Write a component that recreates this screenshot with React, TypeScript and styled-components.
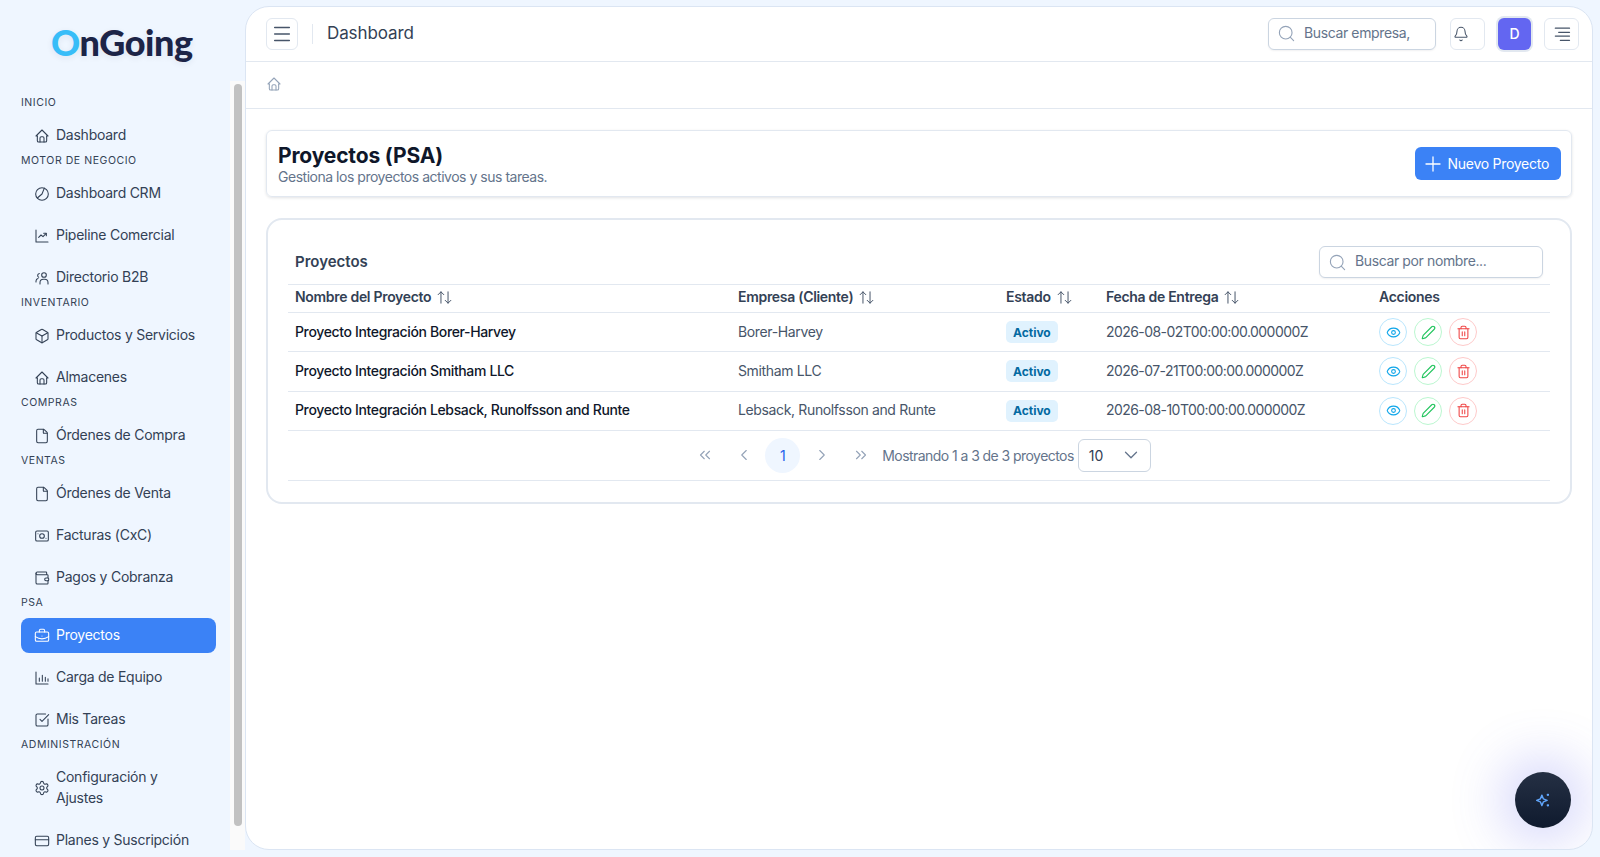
import React from 'react'
import styled, { createGlobalStyle } from 'styled-components'
import {
  Bell, Box, BriefcaseBusiness, ChevronDown, ChevronLeft, ChevronRight, ChevronsLeft, ChevronsRight,
  CreditCard, Eye, File, Menu, Pen, Plus, Search, Settings, SquareCheckBig, Trash2, Wallet,
  ArrowUpDown,
} from 'lucide-react'

const GlobalStyle = createGlobalStyle`
  html, body { margin: 0; height: 100%; }
  body {
    background: #eff6ff;
    font-family: Inter, "Liberation Sans", sans-serif;
    color: #334155;
    overflow: hidden;
  }
  #root { height: 100%; }
  * { box-sizing: border-box; }
`

const Shell = styled.div`
  display: flex;
  height: 857px;
  padding: 6px 7px 7px 6px;
`

const Sidebar = styled.aside`
  position: relative;
  width: 239px;
  flex: none;
  display: flex;
  flex-direction: column;
`

const LogoBox = styled.div`
  height: 75px;
  flex: none;
  padding: 14px 0 0 45px;
  font-family: Lato, Inter, sans-serif;
  font-size: 36px;
  line-height: 44px;
  font-weight: 900;
  letter-spacing: -0.4px;
  color: #1c2447;
  text-shadow: 0 2px 6px rgba(30, 41, 80, 0.08);
`

const LogoO = styled.span`
  color: #38bdf8;
`

const Nav = styled.nav`
  flex: 1;
  min-height: 0;
  overflow: hidden;
  padding: 14px 29px 12px 15px;
`

const ScrollRail = styled.div`
  position: absolute;
  top: 75px;
  right: 0;
  bottom: 0;
  width: 15px;
  padding: 3px 0 0 4px;
  background: #fafafa;
`

const ScrollThumb = styled.div`
  width: 8px;
  height: 742px;
  border-radius: 4px;
  background: #c1c1c1;
`

const SectionLabel = styled.div`
  height: 14px;
  line-height: 16px;
  margin-bottom: 9px;
  font-size: 10.5px;
  font-weight: 400;
  letter-spacing: 0.55px;
  text-transform: uppercase;
  color: #334155;
`

const NavItem = styled.a<{ $active?: boolean }>`
  display: flex;
  align-items: center;
  gap: 6px;
  padding: 7px 13px;
  border-radius: 8px;
  font-size: 14px;
  line-height: 21px;
  letter-spacing: -0.25px;
  color: ${p => (p.$active ? '#ffffff' : '#334155')};
  background: ${p => (p.$active ? '#3b82f6' : 'transparent')};
  & + & { margin-top: 7px; }
  svg { flex: none; }
  span { transform: translateY(-1px); }
`

const Main = styled.main`
  flex: 1;
  min-width: 0;
  position: relative;
  background: #ffffff;
  border: 1px solid #dbe5f3;
  border-radius: 24px;
  overflow: hidden;
`

const TopBar = styled.header`
  height: 55px;
  display: flex;
  align-items: center;
  padding: 0 13px 1px 20px;
  border-bottom: 1px solid #e2e8f0;
`

const IconButton = styled.button<{ $w?: number; $left?: boolean }>`
  width: ${p => p.$w || 32}px;
  height: 32px;
  flex: none;
  display: flex;
  align-items: center;
  justify-content: ${p => (p.$left ? 'flex-start' : 'center')};
  padding: ${p => (p.$left ? '0 0 0 2px' : '0')};
  background: #fff;
  border: 1px solid #e2e8f0;
  border-radius: 6px;
  color: #475569;
`

const TopDivider = styled.span`
  width: 1px;
  height: 20px;
  margin: 0 14px;
  background: #e2e8f0;
`

const PageName = styled.div`
  margin-bottom: 2px;
  font-size: 17px;
  letter-spacing: -0.1px;
  color: #334155;
`

const TopSpacer = styled.div`
  flex: 1;
`

const SearchField = styled.label<{ $w: number }>`
  width: ${p => p.$w}px;
  height: 32px;
  display: flex;
  align-items: center;
  gap: 8px;
  padding: 0 8px;
  background: #fff;
  border: 1px solid #cbd5e1;
  border-radius: 6px;
  box-shadow: 0 1px 2px rgba(15, 23, 42, 0.06);
  color: #94a3b8;
  svg { flex: none; }
`

const SearchInput = styled.input`
  flex: 1;
  min-width: 0;
  margin-bottom: 3px;
  border: 0;
  outline: 0;
  padding: 0;
  font: inherit;
  font-size: 14px;
  letter-spacing: -0.38px;
  &::placeholder { color: #64748b; opacity: 1; }
`

const TopActions = styled.div`
  display: flex;
  align-items: center;
  gap: 13px;
  margin-left: 14px;
`

const Avatar = styled.div`
  width: 33px;
  height: 32px;
  display: flex;
  align-items: center;
  justify-content: center;
  border-radius: 6px;
  background: #6366f1;
  box-shadow: 0 0 0 2px #e2e8f0;
  color: #fff;
  font-size: 14px;
  font-weight: 500;
`

const Crumbs = styled.div`
  height: 47px;
  display: flex;
  align-items: center;
  padding: 0 0 3px 20px;
  border-bottom: 1px solid #e2e8f0;
  color: #94a3b8;
`

const Content = styled.div`
  padding: 21px 20px;
`

const TitleCard = styled.section`
  height: 67px;
  display: flex;
  align-items: center;
  justify-content: space-between;
  padding: 0 10px 0 11px;
  margin-bottom: 21px;
  border: 1px solid #e2e8f0;
  border-radius: 6px;
  box-shadow: 0 1px 3px rgba(15, 23, 42, 0.12);
`

const TitleText = styled.h1`
  margin: 0;
  font-size: 21px;
  line-height: 27px;
  font-weight: 700;
  letter-spacing: -0.15px;
  color: #0f172a;
`

const SubTitle = styled.p`
  margin: 0;
  font-size: 14px;
  line-height: 16px;
  letter-spacing: -0.48px;
  color: #64748b;
`

const PrimaryButton = styled.button`
  height: 33px;
  display: flex;
  align-items: center;
  gap: 3px;
  padding: 0 12px 0 6px;
  border: 0;
  border-radius: 6px;
  background: #3b82f6;
  color: #fff;
  font: inherit;
  font-size: 14px;
  letter-spacing: -0.28px;
`

const ListCard = styled.section`
  height: 286px;
  padding: 26px 20px 0;
  border: 2px solid #e2e8f0;
  border-radius: 16px;
`

const ListHead = styled.div`
  height: 32px;
  display: flex;
  align-items: center;
  justify-content: space-between;
  padding: 0 7px;
  margin-bottom: 6px;
`

const ListTitle = styled.h2`
  margin: 0 0 2px;
  font-size: 15px;
  font-weight: 600;
  color: #334155;
`

const Table = styled.table`
  width: 100%;
  table-layout: fixed;
  border-collapse: collapse;
  font-size: 14px;
`

const HeadCell = styled.th<{ $w: number }>`
  width: ${p => p.$w}px;
  height: 28px;
  padding: 0 7px 4px;
  text-align: left;
  font-size: 14px;
  font-weight: 600;
  letter-spacing: -0.3px;
  color: #334155;
  border-top: 1px solid #e2e8f0;
  border-bottom: 1px solid #e2e8f0;
  svg { margin: 0 0 -4px 5px; color: #475569; }
`

const Cell = styled.td<{ $strong?: boolean; $tight?: boolean }>`
  height: 39.3px;
  padding: 0 7px 2px;
  letter-spacing: ${p => (p.$tight ? '-0.56px' : '-0.36px')};
  color: ${p => (p.$strong ? '#0f172a' : '#475569')};
  font-weight: ${p => (p.$strong ? 500 : 400)};
  border-bottom: 1px solid #e2e8f0;
`

const WidgetCell = styled.td`
  height: 39.3px;
  padding: 0 7px;
  border-bottom: 1px solid #e2e8f0;
`

const Badge = styled.span`
  display: inline-flex;
  align-items: center;
  height: 22px;
  padding: 0 7px;
  border-radius: 5px;
  background: #e0f2fe;
  color: #0369a1;
  font-size: 12px;
  font-weight: 700;
`

const Actions = styled.div`
  display: flex;
  gap: 7px;
`

const ActionButton = styled.button<{ $color: string; $ring: string }>`
  width: 28px;
  height: 28px;
  display: flex;
  align-items: center;
  justify-content: center;
  padding: 0;
  background: #fff;
  border: 1px solid ${p => p.$ring};
  border-radius: 50%;
  color: ${p => p.$color};
`

const Pager = styled.div`
  height: 50px;
  display: flex;
  align-items: center;
  justify-content: center;
  gap: 4px;
  border-bottom: 1px solid #e2e8f0;
  color: #94a3b8;
`

const PageButton = styled.span<{ $current?: boolean }>`
  width: 35px;
  height: 35px;
  display: flex;
  align-items: center;
  justify-content: center;
  border-radius: 50%;
  font-size: 14px;
  color: ${p => (p.$current ? '#2563eb' : '#94a3b8')};
  background: ${p => (p.$current ? '#eff6ff' : 'transparent')};
`

const PagerText = styled.span`
  font-size: 14px;
  letter-spacing: -0.56px;
  color: #64748b;
`

const PageSize = styled.div`
  width: 73px;
  height: 33px;
  display: flex;
  align-items: center;
  justify-content: space-between;
  padding: 0 8px 0 10px;
  border: 1px solid #cbd5e1;
  border-radius: 6px;
  font-size: 14px;
  color: #334155;
  svg { color: #64748b; }
`

const Fab = styled.button`
  position: absolute;
  right: 21px;
  bottom: 21px;
  width: 56px;
  height: 56px;
  display: flex;
  align-items: center;
  justify-content: center;
  padding: 0;
  border: 0;
  border-radius: 50%;
  background: linear-gradient(180deg, #253044, #0f1a2e);
  box-shadow: 0 0 50px 15px rgba(99, 102, 241, 0.25);
  color: #60a5fa;
`

// tabler style house, the sidebar and breadcrumb both use it
const HomeIcon = ({ size = 16 }: { size?: number }) => (
  <svg width={size} height={size} viewBox="0 0 24 24" fill="none" stroke="currentColor" strokeWidth="1.6" strokeLinecap="round" strokeLinejoin="round">
    <path d="M5 12H3l9-9 9 9h-2" />
    <path d="M5 12v7a2 2 0 0 0 2 2h10a2 2 0 0 0 2-2v-7" />
    <path d="M9 21v-6a2 2 0 0 1 2-2h2a2 2 0 0 1 2 2v6" />
  </svg>
)

const StrokeIcon = ({ children }: { children: React.ReactNode }) => (
  <svg width="16" height="16" viewBox="0 0 24 24" fill="none" stroke="currentColor" strokeWidth="1.6" strokeLinecap="round" strokeLinejoin="round">
    {children}
  </svg>
)

const PieIcon = () => (
  <StrokeIcon>
    <circle cx="12" cy="12" r="9.5" />
    <path d="M15.5 3.2 12 12l-7 6" />
  </StrokeIcon>
)

const TrendIcon = () => (
  <StrokeIcon>
    <path d="M3 3v18h18" />
    <path d="m7 14 3.5-3.5 3 2.5L18 8.5" />
    <path d="M14.5 8h4v3.500" />
  </StrokeIcon>
)

const PeopleIcon = () => (
  <StrokeIcon>
    <circle cx="15" cy="7.500" r="3.500" />
    <path d="M9 21v-2a5 5 0 0 1 5-5h2a5 5 0 0 1 5 5v2" />
    <path d="M8 5.200a3 3 0 0 0-1 5.600" />
    <path d="M3 18v-1.500a4 4 0 0 1 3-3.800" />
  </StrokeIcon>
)

const BarsIcon = () => (
  <StrokeIcon>
    <path d="M3 3v18h18" />
    <path d="M8 17v-5M12.500 17V8M17 17v-6M21 17v-4" />
  </StrokeIcon>
)

const CashIcon = () => (
  <StrokeIcon>
    <rect x="2.500" y="4.500" width="19" height="15" rx="2" />
    <circle cx="12" cy="12" r="3.500" />
    <path d="M6 8.500h.01M18 15.500h.01" />
  </StrokeIcon>
)

const LinesIcon = () => (
  <svg width="20" height="20" viewBox="0 0 24 24" fill="none" stroke="currentColor" strokeWidth="1.500" strokeLinecap="round">
    <path d="M4 5h17M8 10h13M4 14.500h17M10 19.500h11" />
  </svg>
)

const SparkIcon = () => (
  <svg width="18" height="18" viewBox="0 0 24 24" fill="none" stroke="currentColor" strokeWidth="1.800" strokeLinejoin="round">
    <path d="M10.500 5.500 12.500 10.500l5 2-5 2-2 5-2-5-5-2 5-2z" />
    <path d="M18.500 3.500v3M17 5h3M18.500 17.500v3M17 19h3" />
  </svg>
)

type NavEntry = { label: string; icon: React.ReactNode; active?: boolean }
type NavSection = { title: string; items: NavEntry[] }

const licon = { size: 16, strokeWidth: 1.6 }

const sections: NavSection[] = [
  { title: 'Inicio', items: [{ label: 'Dashboard', icon: <HomeIcon /> }] },
  {
    title: 'Motor de Negocio',
    items: [
      { label: 'Dashboard CRM', icon: <PieIcon /> },
      { label: 'Pipeline Comercial', icon: <TrendIcon /> },
      { label: 'Directorio B2B', icon: <PeopleIcon /> },
    ],
  },
  {
    title: 'Inventario',
    items: [
      { label: 'Productos y Servicios', icon: <Box {...licon} /> },
      { label: 'Almacenes', icon: <HomeIcon /> },
    ],
  },
  { title: 'Compras', items: [{ label: 'Órdenes de Compra', icon: <File {...licon} /> }] },
  {
    title: 'Ventas',
    items: [
      { label: 'Órdenes de Venta', icon: <File {...licon} /> },
      { label: 'Facturas (CxC)', icon: <CashIcon /> },
      { label: 'Pagos y Cobranza', icon: <Wallet {...licon} /> },
    ],
  },
  {
    title: 'PSA',
    items: [
      { label: 'Proyectos', icon: <BriefcaseBusiness {...licon} />, active: true },
      { label: 'Carga de Equipo', icon: <BarsIcon /> },
      { label: 'Mis Tareas', icon: <SquareCheckBig {...licon} /> },
    ],
  },
  {
    title: 'Administración',
    items: [
      { label: 'Configuración y Ajustes', icon: <Settings {...licon} /> },
      { label: 'Planes y Suscripción', icon: <CreditCard {...licon} /> },
    ],
  },
]

const projects = [
  { name: 'Proyecto Integración Borer-Harvey', client: 'Borer-Harvey', due: '2026-08-02T00:00:00.000000Z' },
  { name: 'Proyecto Integración Smitham LLC', client: 'Smitham LLC', due: '2026-07-21T00:00:00.000000Z' },
  { name: 'Proyecto Integración Lebsack, Runolfsson and Runte', client: 'Lebsack, Runolfsson and Runte', due: '2026-08-10T00:00:00.000000Z' },
]

const columns = [
  { label: 'Nombre del Proyecto', w: 443, sort: true },
  { label: 'Empresa (Cliente)', w: 268, sort: true },
  { label: 'Estado', w: 100, sort: true },
  { label: 'Fecha de Entrega', w: 273, sort: true },
  { label: 'Acciones', w: 178, sort: false },
]

export default function App() {
  return (
    <Shell>
      <GlobalStyle />
      <Sidebar>
        <LogoBox><LogoO>O</LogoO>nGoing</LogoBox>
        <Nav>
          {sections.map(section => (
            <React.Fragment key={section.title}>
              <SectionLabel>{section.title}</SectionLabel>
              {section.items.map(item => (
                <NavItem key={item.label} $active={item.active}>
                  {item.icon}
                  <span>{item.label}</span>
                </NavItem>
              ))}
            </React.Fragment>
          ))}
        </Nav>
        <ScrollRail><ScrollThumb /></ScrollRail>
      </Sidebar>

      <Main>
        <TopBar>
          <IconButton><Menu size={22} strokeWidth={1.6} /></IconButton>
          <TopDivider />
          <PageName>Dashboard</PageName>
          <TopSpacer />
          <SearchField $w={168}>
            <Search size={19} strokeWidth={1.4} />
            <SearchInput placeholder="Buscar empresa," />
          </SearchField>
          <TopActions>
            <IconButton $w={35} $left><Bell size={16} strokeWidth={1.6} /></IconButton>
            <Avatar>D</Avatar>
            <IconButton $w={35}><LinesIcon /></IconButton>
          </TopActions>
        </TopBar>

        <Crumbs><HomeIcon /></Crumbs>

        <Content>
          <TitleCard>
            <div>
              <TitleText>Proyectos (PSA)</TitleText>
              <SubTitle>Gestiona los proyectos activos y sus tareas.</SubTitle>
            </div>
            <PrimaryButton><Plus size={24} strokeWidth={1.3} />Nuevo Proyecto</PrimaryButton>
          </TitleCard>

          <ListCard>
            <ListHead>
              <ListTitle>Proyectos</ListTitle>
              <SearchField $w={224}>
                <Search size={19} strokeWidth={1.4} />
                <SearchInput placeholder="Buscar por nombre..." />
              </SearchField>
            </ListHead>

            <Table>
              <thead>
                <tr>
                  {columns.map(col => (
                    <HeadCell key={col.label} $w={col.w}>
                      {col.label}
                      {col.sort && <ArrowUpDown size={17} strokeWidth={1.4} />}
                    </HeadCell>
                  ))}
                </tr>
              </thead>
              <tbody>
                {projects.map(p => (
                  <tr key={p.name}>
                    <Cell $strong>{p.name}</Cell>
                    <Cell>{p.client}</Cell>
                    <WidgetCell><Badge>Activo</Badge></WidgetCell>
                    <Cell $tight>{p.due}</Cell>
                    <WidgetCell>
                      <Actions>
                        <ActionButton $color="#0ea5e9" $ring="#bae6fd"><Eye size={15} strokeWidth={1.7} /></ActionButton>
                        <ActionButton $color="#22c55e" $ring="#bbf7d0"><Pen size={15} strokeWidth={1.8} /></ActionButton>
                        <ActionButton $color="#ef4444" $ring="#fecaca"><Trash2 size={15} strokeWidth={1.7} /></ActionButton>
                      </Actions>
                    </WidgetCell>
                  </tr>
                ))}
              </tbody>
            </Table>

            <Pager>
              <PageButton><ChevronsLeft size={18} strokeWidth={1.5} /></PageButton>
              <PageButton><ChevronLeft size={18} strokeWidth={1.5} /></PageButton>
              <PageButton $current>1</PageButton>
              <PageButton><ChevronRight size={18} strokeWidth={1.5} /></PageButton>
              <PageButton><ChevronsRight size={18} strokeWidth={1.5} /></PageButton>
              <PagerText>Mostrando 1 a 3 de 3 proyectos</PagerText>
              <PageSize>10<ChevronDown size={22} strokeWidth={1.4} /></PageSize>
            </Pager>
          </ListCard>
        </Content>

        <Fab><SparkIcon /></Fab>
      </Main>
    </Shell>
  )
}
